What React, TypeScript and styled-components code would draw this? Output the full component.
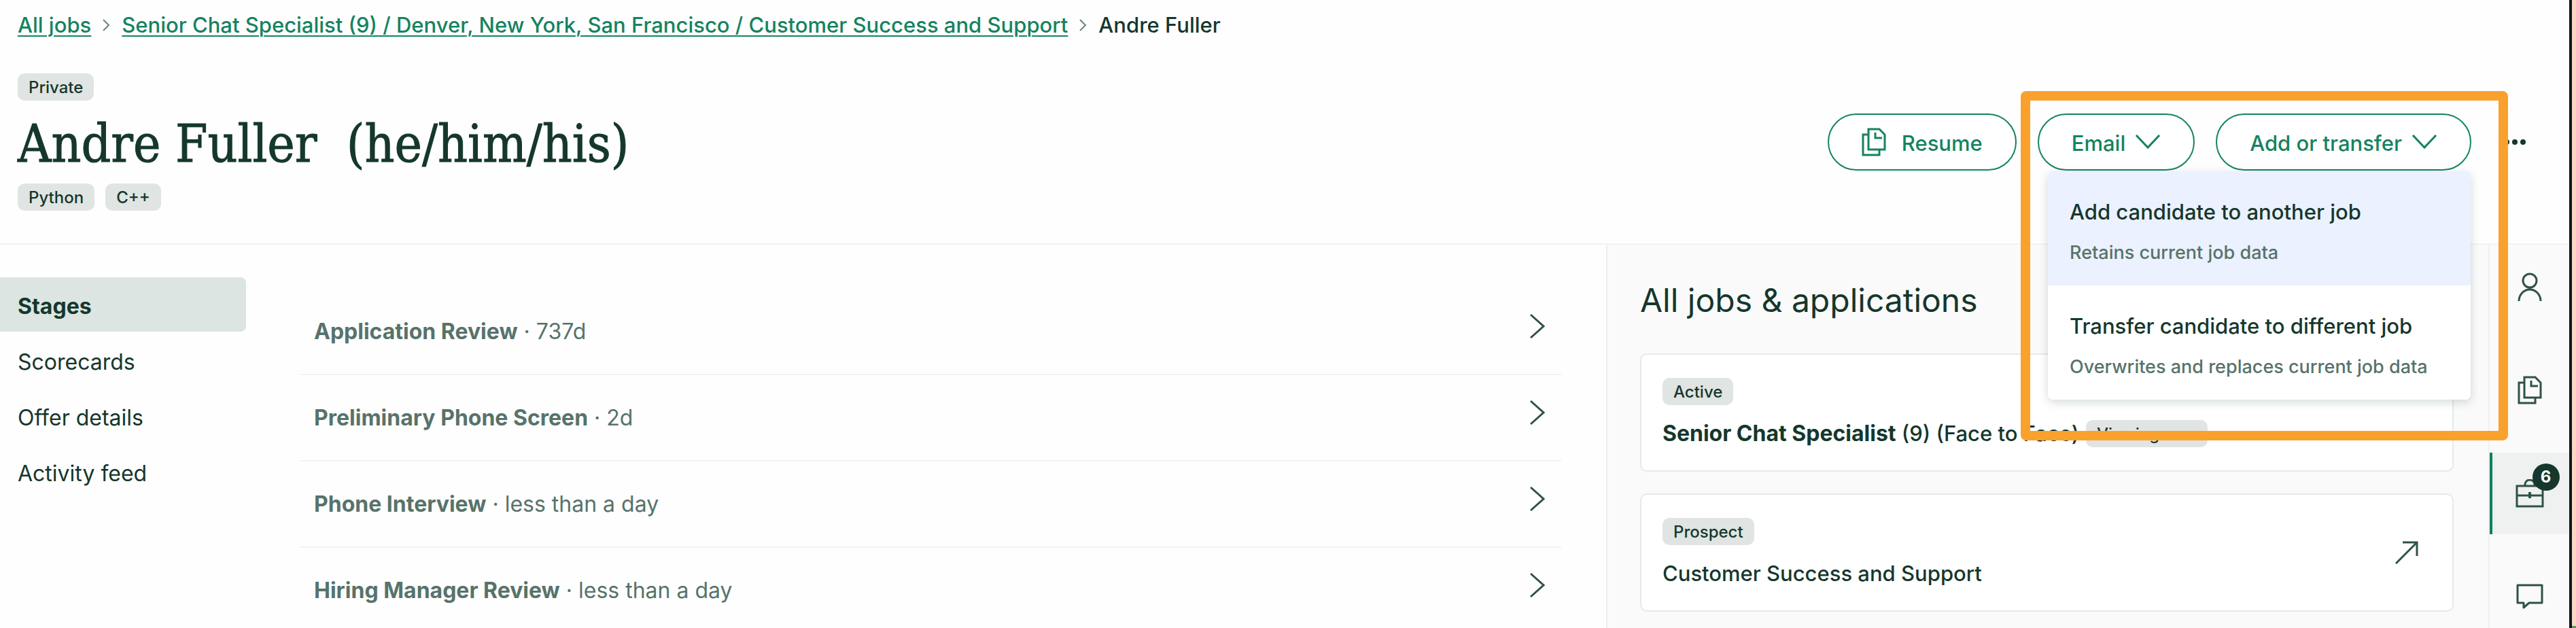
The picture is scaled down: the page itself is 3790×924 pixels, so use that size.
import React from 'react';
import styled, { createGlobalStyle, css } from 'styled-components';

const GlobalStyle = createGlobalStyle`
  * { box-sizing: border-box; }
  body { margin: 0; background: #fefefe; }
  button { font: inherit; cursor: pointer; }
`;

const ink = '#15372c';
const iconInk = '#2f5246';
const muted = '#57736a';
const green = '#15835f';
const line = '#f1f2f2';

const Frame = styled.div`
  display: grid;
  grid-template-columns: minmax(0, 1fr) 10px;
  height: 100vh;
  overflow: hidden;
  font-family: Inter, 'Liberation Sans', sans-serif;
  font-size: 31px;
  font-weight: 500;
  line-height: 40px;
  color: ${ink};
`;

const Page = styled.div`
  display: flex;
  flex-direction: column;
  min-width: 0;
`;

const Desktop = styled.div`
  border-left: 4px solid #0b1916;
  background: linear-gradient(to top, #5c965e 17px, #fed5c4 17px);
`;

const Header = styled.header`
  display: flex;
  flex-direction: column;
  height: 360px;
  padding: 17px 0 0 26px;
  border-bottom: 2px solid ${line};
`;

const Breadcrumb = styled.nav`
  display: flex;
  align-items: center;
  gap: 17px;
`;

const Crumb = styled.a`
  color: ${green};
  text-decoration: underline;
  text-decoration-thickness: 2px;
  text-underline-offset: 4px;
`;

const HeaderRow = styled.div`
  display: flex;
  justify-content: space-between;
  align-items: center;
  margin-top: 51px;
`;

const Identity = styled.div`
  display: flex;
  flex-direction: column;
`;

const Name = styled.h1`
  margin: 0;
  padding: 16px 0 10px;
  font-family: 'DejaVu Serif Condensed', 'Liberation Serif', serif;
  font-size: 76px;
  line-height: 96px;
  font-weight: 400;
  -webkit-text-stroke: 1px ${ink};
  white-space: pre;
`;

const Tags = styled.div`
  display: flex;
  gap: 16px;
`;

const Tag = styled.span`
  display: inline-flex;
  align-items: center;
  height: 40px;
  padding: 2px 16px 0;
  border-radius: 10px;
  background: #e0e4e2;
  font-size: 24px;
  line-height: 32px;
`;

const Actions = styled.div`
  display: flex;
  align-items: center;
  gap: 31px;
  padding-right: 64px;
`;

const Pill = styled.button<{ $gap?: number }>`
  display: flex;
  align-items: center;
  gap: ${p => p.$gap ?? 14}px;
  height: 84px;
  padding: 0 48px;
  border: 2px solid ${green};
  border-radius: 42px;
  background: #fff;
  color: ${green};

  span { padding-top: 4px; }
`;

const MenuAnchor = styled.div`
  position: relative;
`;

const Menu = styled.div`
  position: absolute;
  z-index: 2;
  top: 85px;
  right: 1px;
  width: 622px;
  border-radius: 8px;
  overflow: hidden;
  background: #fff;
  box-shadow: 0 4px 14px rgba(20, 50, 40, 0.18);
`;

const MenuItem = styled.button<{ $active?: boolean }>`
  display: flex;
  flex-direction: column;
  gap: 20px;
  width: 100%;
  height: 168px;
  padding: 40px 32px 0;
  border: 0;
  text-align: left;
  color: ${ink};
  background: ${p => (p.$active ? '#ebf1fe' : '#fff')};
`;

const MenuHint = styled.span`
  color: ${muted};
  font-size: 27px;
`;

const Callout = styled.div`
  position: absolute;
  z-index: 3;
  top: -33px;
  right: -54px;
  width: 717px;
  height: 514px;
  border: 14px solid #faa12d;
  border-radius: 8px;
  pointer-events: none;
`;

const More = styled.button`
  display: flex;
  margin-left: 17px;
  padding: 0;
  border: 0;
  background: none;
  color: ${ink};
`;

const Body = styled.div`
  display: grid;
  grid-template-columns: 362px minmax(0, 1fr) 1298px 119px;
  flex: 1;
`;

const SideNav = styled.nav`
  display: flex;
  flex-direction: column;
  gap: 2px;
  padding-top: 48px;
`;

const SideLink = styled.a<{ $active?: boolean }>`
  display: flex;
  align-items: center;
  height: 80px;
  padding: 6px 26px 0;
  color: ${ink};
  font-size: 32px;
  font-weight: 400;
  text-decoration: none;
  ${p => p.$active && css`
    border-radius: 0 8px 8px 0;
    background: #dce5e2;
    font-weight: 700;
  `}
`;

const StageList = styled.ul`
  margin: 0;
  padding: 65px 66px 0 80px;
  list-style: none;
`;

const Stage = styled.li`
  display: flex;
  justify-content: space-between;
  align-items: center;
  height: 127px;
  padding: 0 24px 0 20px;
  border-bottom: 2px solid ${line};
  color: ${muted};
  font-size: 32px;
  font-weight: 400;

  svg { margin-bottom: 16px; }
`;

const Panel = styled.section`
  display: flex;
  flex-direction: column;
  gap: 32px;
  padding: 52px 51px 0 48px;
  border-left: 2px solid #ededed;
  background: #fafafa;
`;

const PanelTitle = styled.h2`
  margin: 0 0 16px;
  font-size: 48px;
  line-height: 60px;
  font-weight: 400;
`;

const Card = styled.article`
  display: flex;
  justify-content: space-between;
  align-items: center;
  height: 174px;
  padding: 0 50px 0 31px;
  border: 2px solid #e6eae9;
  border-radius: 10px;
  background: #fff;
`;

const CardText = styled.div`
  display: flex;
  flex-direction: column;
  align-items: flex-start;
  gap: 22px;
`;

const JobTitle = styled.div`
  display: flex;
  align-items: center;
  gap: 10px;

  b { font-size: 32px; }
`;

const Rail = styled.nav`
  display: flex;
  flex-direction: column;
  gap: 32px;
  padding-top: 2px;
  border-left: 2px solid #f0f0f0;
  background: #fafafa;
`;

const RailButton = styled.button<{ $active?: boolean }>`
  display: flex;
  flex: none;
  align-items: center;
  justify-content: center;
  height: 120px;
  padding: 0 4px 0 0;
  border: 0;
  border-left: 4px solid ${p => (p.$active ? '#0c8060' : 'transparent')};
  background: ${p => (p.$active ? '#eef1f0' : 'transparent')};
  color: ${iconInk};
`;

const BadgeAnchor = styled.span`
  position: relative;
  display: flex;
`;

const Badge = styled.span`
  position: absolute;
  top: -23px;
  right: -23px;
  width: 40px;
  height: 40px;
  border-radius: 20px;
  background: ${ink};
  color: #fff;
  font-size: 24px;
  font-weight: 700;
  text-align: center;
`;

const Icon = styled.svg<{ $weight?: number }>`
  display: block;
  flex: none;
  fill: none;
  stroke: currentColor;
  stroke-width: ${p => p.$weight ?? 3};
`;

const DotsIcon = styled(Icon)`
  fill: currentColor;
  stroke: none;
`;

const CrumbArrow = () => (
  <Icon width="11" height="18" viewBox="0 0 11 18" $weight={2} color="#6b837b"><path d="M1 1l8 8-8 8" /></Icon>
);
const ChevronDown = () => (
  <Icon width="38" height="22" viewBox="0 0 38 22"><path d="M2 1l17 18L36 1" /></Icon>
);
const ChevronRight = () => (
  <Icon width="22" height="38" viewBox="0 0 22 38" color={iconInk}><path d="M1 2l19 17L1 36" /></Icon>
);
const Documents = () => (
  <Icon width="36" height="42" viewBox="0 0 36 42">
    <path d="M10 2h16l8 8v22H10zM20 7v8h10M10 10H2v30h24v-8" />
  </Icon>
);
const Person = () => (
  <Icon width="36" height="42" viewBox="0 0 36 42">
    <circle cx="18" cy="12" r="10" /><path d="M2 42a16 17 0 0 1 32 0M18 22v3" />
  </Icon>
);
const Briefcase = () => (
  <Icon width="42" height="42" viewBox="0 0 42 42">
    <path d="M2 10h38v30H2zM2 24h38M14 10v-2a7 7 0 0 1 14 0v2" /><path d="M21 19v9" strokeWidth="4" />
  </Icon>
);
const Chat = () => (
  <Icon width="40" height="38" viewBox="0 0 40 38" strokeLinejoin="round">
    <path d="M2 2h36v26H19l-8 7v-7H2z" />
  </Icon>
);
const OpenArrow = () => (
  <Icon width="34" height="34" viewBox="0 0 34 34" color={iconInk}><path d="M1 33L32 2M11 2h21v20" /></Icon>
);
const Dots = () => (
  <DotsIcon width="32" height="10" viewBox="0 0 32 10">
    <circle cx="4" cy="5" r="4" /><circle cx="16" cy="5" r="4" /><circle cx="28" cy="5" r="4" />
  </DotsIcon>
);

const stages = [
  ['Application Review', '737d'],
  ['Preliminary Phone Screen', '2d'],
  ['Phone Interview', 'less than a day'],
  ['Hiring Manager Review', 'less than a day'],
];

export default function App() {
  return (
    <Frame>
      <GlobalStyle />
      <Page>
        <Header>
          <Breadcrumb aria-label="Breadcrumb">
            <Crumb href="#jobs">All jobs</Crumb>
            <CrumbArrow />
            <Crumb href="#job">Senior Chat Specialist (9) / Denver, New York, San Francisco / Customer Success and Support</Crumb>
            <CrumbArrow />
            <span>Andre Fuller</span>
          </Breadcrumb>
          <HeaderRow>
            <Identity>
              <Tags><Tag>Private</Tag></Tags>
              <Name>Andre Fuller  (he/him/his)</Name>
              <Tags><Tag>Python</Tag><Tag>C++</Tag></Tags>
            </Identity>
            <Actions>
              <Pill $gap={23}><Documents /><span>Resume</span></Pill>
              <Pill><span>Email</span><ChevronDown /></Pill>
              <MenuAnchor>
                <Pill><span>Add or transfer</span><ChevronDown /></Pill>
                <Menu>
                  <MenuItem $active>Add candidate to another job<MenuHint>Retains current job data</MenuHint></MenuItem>
                  <MenuItem>Transfer candidate to different job<MenuHint>Overwrites and replaces current job data</MenuHint></MenuItem>
                </Menu>
                <Callout />
              </MenuAnchor>
              <More aria-label="More actions"><Dots /></More>
            </Actions>
          </HeaderRow>
        </Header>
        <Body>
          <SideNav>
            <SideLink href="#stages" $active>Stages</SideLink>
            <SideLink href="#scorecards">Scorecards</SideLink>
            <SideLink href="#offer">Offer details</SideLink>
            <SideLink href="#activity">Activity feed</SideLink>
          </SideNav>
          <StageList>
            {stages.map(([name, time]) => (
              <Stage key={name}><span><b>{name}</b> · {time}</span><ChevronRight /></Stage>
            ))}
          </StageList>
          <Panel>
            <PanelTitle>All jobs &amp; applications</PanelTitle>
            <Card>
              <CardText>
                <Tag>Active</Tag>
                <JobTitle><span><b>Senior Chat Specialist</b> (9) (Face to Face)</span><Tag>Viewing now</Tag></JobTitle>
              </CardText>
            </Card>
            <Card>
              <CardText>
                <Tag>Prospect</Tag>
                <JobTitle>Customer Success and Support</JobTitle>
              </CardText>
              <OpenArrow />
            </Card>
          </Panel>
          <Rail aria-label="Panels">
            <RailButton aria-label="Profile"><Person /></RailButton>
            <RailButton aria-label="Documents"><Documents /></RailButton>
            <RailButton aria-label="Jobs" $active><BadgeAnchor><Briefcase /><Badge>6</Badge></BadgeAnchor></RailButton>
            <RailButton aria-label="Notes"><Chat /></RailButton>
          </Rail>
        </Body>
      </Page>
      <Desktop />
    </Frame>
  );
}
